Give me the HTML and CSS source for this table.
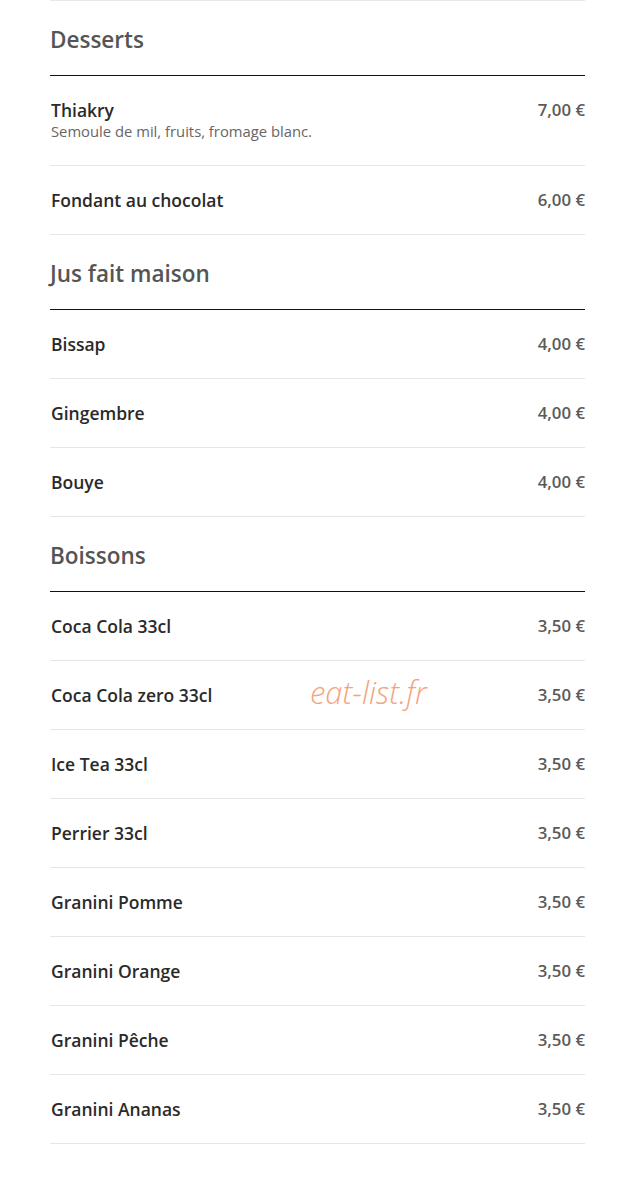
FILE: index.html
```html
<!DOCTYPE html>
<html lang="fr">
<head>
  <meta charset="UTF-8">
  <meta name="viewport" content="width=device-width, initial-scale=1.0">
  <title>Carte</title>
  <link rel="stylesheet" href="styles.css">
</head>
<body>
  <div class="menu">
    <h3 class="section-title">Desserts</h3>
    <div class="item">
      <div class="item-info">
        <div class="item-name">Thiakry</div>
        <div class="item-desc">Semoule de mil, fruits, fromage blanc.</div>
      </div>
      <div class="item-price">7,00 €</div>
    </div>
    <div class="item">
      <div class="item-info"><div class="item-name">Fondant au chocolat</div></div>
      <div class="item-price">6,00 €</div>
    </div>

    <h3 class="section-title">Jus fait maison</h3>
    <div class="item">
      <div class="item-info"><div class="item-name">Bissap</div></div>
      <div class="item-price">4,00 €</div>
    </div>
    <div class="item">
      <div class="item-info"><div class="item-name">Gingembre</div></div>
      <div class="item-price">4,00 €</div>
    </div>
    <div class="item">
      <div class="item-info"><div class="item-name">Bouye</div></div>
      <div class="item-price">4,00 €</div>
    </div>

    <h3 class="section-title">Boissons</h3>
    <div class="item">
      <div class="item-info"><div class="item-name">Coca Cola 33cl</div></div>
      <div class="item-price">3,50 €</div>
    </div>
    <div class="item">
      <div class="item-info"><div class="item-name">Coca Cola zero 33cl</div></div>
      <div class="item-price">3,50 €</div>
      <span class="watermark">eat-list.fr</span>
    </div>
    <div class="item">
      <div class="item-info"><div class="item-name">Ice Tea 33cl</div></div>
      <div class="item-price">3,50 €</div>
    </div>
    <div class="item">
      <div class="item-info"><div class="item-name">Perrier 33cl</div></div>
      <div class="item-price">3,50 €</div>
    </div>
    <div class="item">
      <div class="item-info"><div class="item-name">Granini Pomme</div></div>
      <div class="item-price">3,50 €</div>
    </div>
    <div class="item">
      <div class="item-info"><div class="item-name">Granini Orange</div></div>
      <div class="item-price">3,50 €</div>
    </div>
    <div class="item">
      <div class="item-info"><div class="item-name">Granini Pêche</div></div>
      <div class="item-price">3,50 €</div>
    </div>
    <div class="item">
      <div class="item-info"><div class="item-name">Granini Ananas</div></div>
      <div class="item-price">3,50 €</div>
    </div>
  </div>
</body>
</html>
```

FILE: styles.css
```css
body {
  margin: 0;
  background: #fff;
  font-family: "Open Sans", "Noto Sans", Arial, sans-serif;
  color: #222;
}
.menu {
  max-width: 535px;
  margin: 0 auto;
  border-top: 1px solid #e8e8e8;
}
.section-title {
  margin: 0;
  padding: 25px 0 21px;
  font-size: 22.5px;
  line-height: 28px;
  font-weight: 600;
  color: #555;
  border-bottom: 1px solid #111;
}
.item {
  position: relative;
  display: flex;
  justify-content: space-between;
  align-items: flex-start;
  padding: 23px 0 23px 1px;
  border-bottom: 1px solid #e6e6e6;
}
.item-name {
  font-size: 17.5px;
  line-height: 22px;
  font-weight: 600;
  color: #2a2a2a;
}
.item-desc {
  font-size: 14.8px;
  line-height: 21px;
  color: #666;
}
.item-price {
  font-size: 16.8px;
  line-height: 22px;
  font-weight: 600;
  color: #5a5a5a;
}
.watermark {
  position: absolute;
  left: 260px;
  top: 10px;
  font-size: 31px;
  font-style: italic;
  font-weight: 300;
  color: #f4a47c;
  pointer-events: none;
}
```
